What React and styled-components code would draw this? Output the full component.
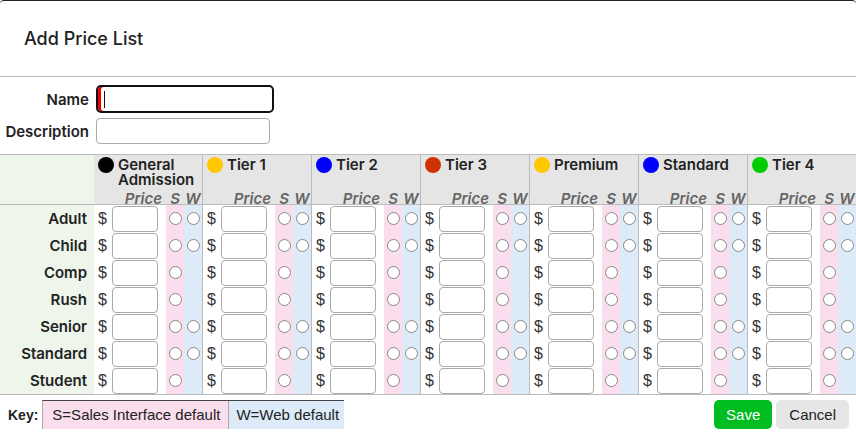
import React from 'react'
import styled, { createGlobalStyle } from 'styled-components'

const GlobalStyle = createGlobalStyle`
  html, body { margin: 0; padding: 0; background: #fff; }
  body { font-family: Inter, 'Noto Sans', sans-serif; color: #222; }
`

const Dialog = styled.div`
  width: 856px;
  height: 436px;
  border-top: 1px solid #222;
  border-radius: 4px 4px 0 0;
  box-sizing: border-box;
  overflow: hidden;
  position: relative;
`

const TitleBar = styled.div`
  height: 76px;
  border-bottom: 1px solid #bbb;
  display: flex;
  align-items: center;
  padding: 0 24px;
  padding-bottom: 1px;
  box-sizing: border-box;
`

const Title = styled.h2`
  margin: 0;
  font-size: 18px;
  font-weight: 500;
`

const Form = styled.div`
  display: flex;
  flex-direction: column;
  gap: 5px;
  padding: 8px 0 10px;
`

const FieldRow = styled.div`
  display: flex;
  align-items: center;
  gap: 7px;
`

const FieldLabel = styled.label`
  width: 89px;
  text-align: right;
  font-size: 15px;
  font-weight: 600;
`

const FocusWrap = styled.div`
  position: relative;
  width: 178px;
  height: 28px;
  border: 2px solid #111;
  border-radius: 5px;
  box-sizing: border-box;
  box-shadow: inset 3px 0 0 #e00;
  &::after {
    content: '';
    position: absolute;
    left: 6px;
    top: 4px;
    width: 1px;
    height: 17px;
    background: #111;
  }
`

const TextBox = styled.div`
  width: 174px;
  height: 26px;
  border: 1px solid #aaa;
  border-radius: 4px;
  box-sizing: border-box;
`

const TableWrap = styled.div`
  width: 856px;
  overflow: hidden;
`

const Table = styled.div`
  width: 857px;
  border-top: 1px solid #bbb;
  border-bottom: 1px solid #bbb;
`

const HeadRow = styled.div`
  display: flex;
  height: 50px;
  border-bottom: 1px solid #bbb;
  box-sizing: border-box;
`

const Row = styled.div`
  display: flex;
  height: 27px;
`

const Corner = styled.div`
  width: 94px;
  flex: none;
  background: #eef5ea;
`

const RowLabel = styled.div`
  width: 94px;
  flex: none;
  background: #eef5ea;
  box-sizing: border-box;
  padding-right: 7px;
  text-align: right;
  font-size: 15px;
  font-weight: 600;
  line-height: 27px;
`

const GroupHead = styled.div`
  width: 109px;
  flex: none;
  box-sizing: border-box;
  border-right: 1px solid #bbb;
  background: #e5e5e5;
  display: flex;
  flex-direction: column;
  justify-content: space-between;
`

const GroupName = styled.div`
  display: flex;
  align-items: flex-start;
  gap: 4px;
  padding: 2px 4px 0;
  font-size: 15px;
  font-weight: 600;
  line-height: 15px;
`

const Dot = styled.span`
  width: 16px;
  height: 16px;
  border-radius: 50%;
  background: ${p => p.$color};
  flex: none;
`

const SubHead = styled.div`
  display: flex;
  font-size: 15px;
  font-weight: 600;
  font-style: italic;
  color: #666;
  line-height: 11px;
`

const PriceHead = styled.span`
  width: 68px;
  text-align: right;
`

const SWHead = styled.span`
  width: 18px;
  text-align: center;
  margin-left: ${p => p.$first ? '4px' : '0'};
`

const Cell = styled.div`
  width: 109px;
  flex: none;
  box-sizing: border-box;
  border-right: 1px solid #bbb;
  display: flex;
  align-items: center;
  padding-left: 4px;
`

const Dollar = styled.span`
  width: 14px;
  font-family: 'Liberation Sans', Arial, sans-serif;
  font-size: 16px;
  color: #333;
`

const PriceBox = styled.div`
  width: 46px;
  height: 26px;
  border: 1px solid #aaa;
  border-radius: 4px;
  box-sizing: border-box;
  margin-right: 8px;
`

const Flag = styled.div`
  width: 18px;
  align-self: stretch;
  background: ${p => p.$kind === 's' ? '#fbdeed' : '#ddebf9'};
  display: flex;
  align-items: center;
  justify-content: center;
`

const Radio = styled.span`
  width: 13px;
  height: 13px;
  border: 1px solid #888;
  border-radius: 50%;
  background: #fff;
  box-sizing: border-box;
`

const Footer = styled.div`
  display: flex;
  align-items: center;
  padding: 5px 7px 0 8px;
  font-family: 'Liberation Sans', Arial, sans-serif;
`

const KeyLabel = styled.span`
  font-size: 14px;
  font-weight: 700;
  margin-right: 4px;
`

const KeyBox = styled.div`
  display: flex;
  height: 29px;
  border-top: 1px solid #444;
  border-left: 1px solid #aaa;
  box-sizing: border-box;
`

const KeyItem = styled.span`
  padding: ${p => p.$kind === 's' ? '0 8px 0 9px' : '0 5px 0 7px'};
  line-height: 28px;
  font-size: 15px;
  color: #222;
  background: ${p => p.$kind === 's' ? '#fbdeed' : '#ddebf9'};
  border-right: ${p => p.$kind === 's' ? '1px solid #aaa' : 'none'};
`

const Actions = styled.div`
  margin-left: auto;
  display: flex;
  gap: 4px;
`

const Button = styled.button`
  height: 29px;
  border: none;
  border-radius: 5px;
  padding: 0 ${p => p.$primary ? '12px' : '13px'};
  font-family: 'Liberation Sans', Arial, sans-serif;
  font-size: 15px;
  color: ${p => p.$primary ? '#fff' : '#222'};
  background: ${p => p.$primary ? '#00bd20' : '#e6e6e6'};
`

const groups = [
  { name: 'General Admission', color: '#000' },
  { name: 'Tier 1', color: '#ffc800' },
  { name: 'Tier 2', color: '#0000ff' },
  { name: 'Tier 3', color: '#cc3300' },
  { name: 'Premium', color: '#ffc800' },
  { name: 'Standard', color: '#0000ff' },
  { name: 'Tier 4', color: '#00cc00' }
]

const rows = [
  { label: 'Adult', web: true },
  { label: 'Child', web: true },
  { label: 'Comp', web: false },
  { label: 'Rush', web: false },
  { label: 'Senior', web: true },
  { label: 'Standard', web: true },
  { label: 'Student', web: false }
]

export default function App () {
  return (
    <Dialog>
      <GlobalStyle />
      <TitleBar>
        <Title>Add Price List</Title>
      </TitleBar>
      <Form>
        <FieldRow>
          <FieldLabel>Name</FieldLabel>
          <FocusWrap />
        </FieldRow>
        <FieldRow>
          <FieldLabel>Description</FieldLabel>
          <TextBox />
        </FieldRow>
      </Form>
      <TableWrap>
        <Table>
          <HeadRow>
            <Corner />
            {groups.map(g => (
              <GroupHead key={g.name}>
                <GroupName>
                  <Dot $color={g.color} />
                  <span>{g.name}</span>
                </GroupName>
                <SubHead>
                  <PriceHead>Price</PriceHead>
                  <SWHead $first>S</SWHead>
                  <SWHead>W</SWHead>
                </SubHead>
              </GroupHead>
            ))}
          </HeadRow>
          {rows.map(r => (
            <Row key={r.label}>
              <RowLabel>{r.label}</RowLabel>
              {groups.map(g => (
                <Cell key={g.name}>
                  <Dollar>$</Dollar>
                  <PriceBox />
                  <Flag $kind='s'><Radio /></Flag>
                  <Flag $kind='w'>{r.web && <Radio />}</Flag>
                </Cell>
              ))}
            </Row>
          ))}
        </Table>
      </TableWrap>
      <Footer>
        <KeyLabel>Key:</KeyLabel>
        <KeyBox>
          <KeyItem $kind='s'>S=Sales Interface default</KeyItem>
          <KeyItem $kind='w'>W=Web default</KeyItem>
        </KeyBox>
        <Actions>
          <Button $primary>Save</Button>
          <Button>Cancel</Button>
        </Actions>
      </Footer>
    </Dialog>
  )
}
